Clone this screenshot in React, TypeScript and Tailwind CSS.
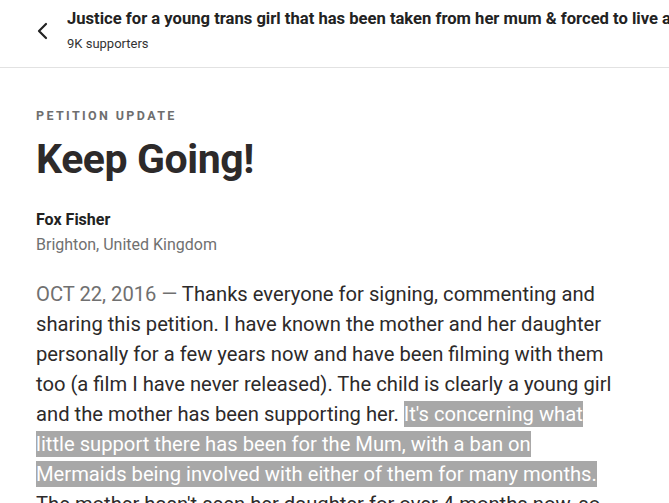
export default function App() {
    return (
        <div className="w-[669px] h-[503px] overflow-hidden bg-white text-[#333] font-['Roboto','Liberation_Sans',sans-serif]">
            <header className="h-[68px] border-b border-[#e2e2e2] flex items-start">
                <div className="w-[67px] flex justify-center pl-[18px] pt-[21px]">
                    <svg width="14" height="20" viewBox="0 0 14 20" fill="none" stroke="#222" strokeWidth="2.2" strokeLinecap="round" strokeLinejoin="round">
                        <path d="M10 3 L3 10 L10 17" />
                    </svg>
                </div>
                <div className="min-w-0 flex-1 pt-[9px]">
                    <div className="whitespace-nowrap overflow-hidden text-[16.6px] font-bold leading-[20px] text-[#222]">
                        Justice for a young trans girl that has been taken from her mum &amp; forced to live as a boy
                    </div>
                    <div className="text-[13px] leading-[16px] mt-[7px] text-[#333]">9K supporters</div>
                </div>
            </header>

            <main className="px-[36px] pt-[41px]">
                <div className="text-[12.5px] font-bold tracking-[0.19em] text-[#6e6e6e] leading-[14px]">PETITION UPDATE</div>
                <h1 className="text-[41px] font-bold leading-[48px] text-[#2d2a2a] mt-[12px] tracking-[-0.01em]">Keep Going!</h1>

                <div className="mt-[27px] text-[16px] font-bold leading-[20px] text-[#222]">Fox Fisher</div>
                <div className="text-[16px] leading-[20px] mt-[5px] text-[#707070]">Brighton, United Kingdom</div>

                <p className="mt-[24px] text-[20.2px] leading-[30px] text-[#2d2a2a] w-[582px]">
                    <span className="text-[#707070]">OCT 22, 2016 — </span>
                    Thanks everyone for signing, commenting and sharing this petition. I have known the mother and her daughter personally for a few years now and have been filming with them too (a film I have never released). The child is clearly a young girl and the mother has been supporting her.{" "}
                    <span className="bg-[#a8a8a8] text-white py-[1px]">
                        It's concerning what little support there has been for the Mum, with a ban on Mermaids being involved with either of them for many months.
                    </span>{" "}
                    The mother hasn't seen her daughter for over 4 months now, so please keep sharing.
                </p>
            </main>
        </div>
    )
}
